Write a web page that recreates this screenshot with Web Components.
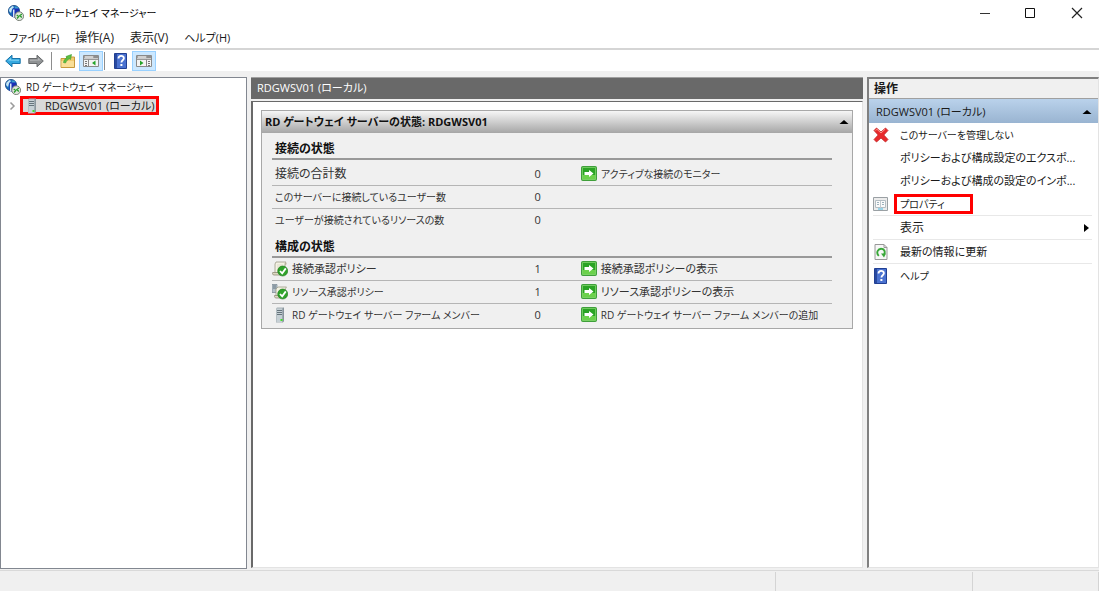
<!DOCTYPE html>
<html lang="ja">
<head>
<meta charset="utf-8">
<meta name="viewport" content="width=device-width, initial-scale=1">
<title>RD ゲートウェイ マネージャー</title>
<style>
  body {
    margin: 0;
    background: #f0f0f0;
    color: #1a1a1a;
    font: 12px/16px "Open Sans", "Noto Sans CJK JP", sans-serif;
    font-feature-settings: "palt";
  }
</style>
</head>
<body>
<console-window></console-window>

<script>
const define = (name, html, setup) => {
  const template = document.createElement('template');
  template.innerHTML = '<style>*,*::after{box-sizing:border-box}button{font:inherit;color:inherit;background:none;border:0;margin:0;padding:0;text-align:left;font-feature-settings:inherit}.small{font-size:10px}.medium{font-size:11px}</style>' + html;
  customElements.define(name, class extends HTMLElement {
    connectedCallback() {
      if (this.shadowRoot) return;
      this.attachShadow({ mode: 'open' }).append(template.content.cloneNode(true));
      if (setup) setup(this, this.shadowRoot);
    }
  });
};

const tower = `
  <path d="M4 1.500 5 .5h7v13.500l-1 1.500H4z" fill="#a3adb3"/>
  <path d="M4.500 1.500h6v13.500h-6z" fill="#c6d0d5"/>
  <path d="M10.500 1.500 12 .5v13.500l-1.500 1.500z" fill="#8a969d"/>
  <path d="M5 3.500h5M5 5.500h5M5 7.500h5" stroke="#66747c"/>
  <path d="M8.500 12h2v2h-2z" fill="#43e02a"/>`;
const check = `
  <circle cx="10.700" cy="10" r="5" fill="#2fa22a" stroke="#187716" stroke-width=".6"/>
  <path d="M8 10l2.200 2.400 3.600-5" fill="none" stroke="#fff" stroke-width="1.800"/>`;
const arrow = 'M.7 8 7 2.200v3.300h8.200v5H7v3.300z';
const windowFrame = `
  <path d="M.5 2.500h15v11H.5z" fill="#f4f4f4" stroke="#8a8a8a"/>
  <path d="M1 3h14v2.500H1z" fill="#a2a2a2"/>
  <path d="M2 4h8" stroke="#fff"/><path d="M11.500 4h1M13.500 4h1" stroke="#555"/>
  <path d="M1 6.500h14" stroke="#999"/>`;
const icons = {
  app: `
    <circle cx="6" cy="6" r="5.600" fill="#1b6fbd" stroke="#14457f" stroke-width=".8"/>
    <path d="M1.500 3.500 4.500 1l1.500 1L4 4.500 3 8 1 6z" fill="#c6e6f4"/>
    <path d="M7 1.500l3.500 1-.5 1.500H7z" fill="#3fa0cf"/>
    <path d="M4.500 3.500h6.500v10.500l-6.500-2z" fill="#1a2fb5"/>
    <path d="M5 4.500h1.500v8L5 12z" fill="#dce9f7"/>
    <circle cx="11.200" cy="11.200" r="4.400" fill="#dfe5dc" stroke="#6f776d" stroke-width=".9"/>
    <path d="M8.700 10l2 1.500-1.700 2M13.900 9l-2 1.500 1.900 2" fill="none" stroke="#279b2a" stroke-width="1.300"/>`,
  back: `<path d="${arrow}" fill="#35a8df" stroke="#1873a9"/><path d="M3 7.500 6 5v1.800h8v1z" fill="#8bd5f3"/>`,
  forward: `<g transform="matrix(-1 0 0 1 16 0)"><path d="${arrow}" fill="#8f9294" stroke="#66696b"/><path d="M3 7.500 6 5v1.800h8v1z" fill="#b6b8ba"/></g>`,
  folder: `
    <path d="M1 5.500h5l1-1.500h7.500v10.500H1z" fill="#f1cb70" stroke="#c79a3c"/>
    <path d="M1.500 8h12.500v6H1.500z" fill="#f9df98"/>
    <path d="M3.500 9.500c.5-2.500 1.500-4 3.500-4.500L6 3.500 11.500 1.500 10.500 6.500 9.300 5.800C7.500 6.500 6.500 8 5.500 10z" fill="#5cc043" stroke="#3b9a2b" stroke-width=".6"/>`,
  tree: windowFrame + `
    <path d="M5.500 6.500v7" stroke="#888"/><path d="M2 8.500h2M2 10.500h2M2 12.500h2" stroke="#777"/>
    <path d="M12.500 7.500v5L9 10z" fill="#25a52a"/>`,
  actions: windowFrame + `
    <path d="M10.500 6.500v7" stroke="#888"/><path d="M12 8.500h2M12 10.500h2M12 12.500h2" stroke="#777"/>
    <path d="M4 7.500v5L7.500 10z" fill="#25a52a"/>`,
  help: `
    <path d="M1.500.5h12v15h-12z" fill="#4a72d0" stroke="#203f93"/>
    <path d="M2 1h2v14H2z" fill="#294a9f"/>
    <path d="M5.500 5.500c0-3.400 5.400-3.400 5.400-.2 0 2-2.500 2-2.500 4.200" fill="none" stroke="#fff" stroke-width="1.800"/>
    <path d="M7.400 11h2v2h-2z" fill="#fff"/>`,
  server: tower,
  policy: `
    <path d="M4 1h10c-1 1-1 2-1 3v8H3V3z" fill="#f4f2e4" stroke="#9c9b85" stroke-width=".8"/>
    <path d="M13 1c2 0 2 3 .5 3H13z" fill="#b7b39d"/>
    <path d="M.7 11.500H9V14H2C.5 14 .3 12.500.7 11.500z" fill="#ddd9c3" stroke="#8f8c76" stroke-width=".8"/>
    <path d="M5 4h6M5 6h6M5 8h4" stroke="#dedbc8"/>` + check,
  resource: `
    <path d="M0 .5h5v8H0z" fill="#b5c1c9" stroke="#77858f" stroke-width=".7"/>
    <path d="M1 2h3M1 4h3" stroke="#647580"/>
    <path d="M6 3h8.500c-1 1-1 2-1 3v7H4V5z" fill="#f4f2e4" stroke="#9c9b85" stroke-width=".8"/>
    <path d="M2.500 11.500H9V14H4c-1.200 0-1.800-1.500-1.500-2.500z" fill="#ddd9c3" stroke="#8f8c76" stroke-width=".8"/>` + check,
  go: `
    <rect x=".5" y=".5" width="15" height="14" rx="1" fill="#2aa324" stroke="#3f9f3a"/>
    <path d="M1.500 9h13v4.500h-13z" fill="#6bd14b"/>
    <path d="M1.500 1.500h13v12h-13z" fill="none" stroke="#8edb79" stroke-width=".7"/>
    <path d="M3.500 6H8V4l4.500 3.500L8 11V9H3.500z" fill="#fff"/>`,
  remove: `
    <path d="M1 3.500 3.500 1 8 5l4.500-4L15 3.500 10.800 8l4.200 4.500-2.500 2.500L8 11l-4.500 4L1 12.500 5.200 8z" fill="#e8292c" stroke="#c22424" stroke-width=".8"/>
    <path d="M2.500 3.500 4 2.300 8 6l4-3.700" fill="none" stroke="#ff9186"/>`,
  properties: `
    <path d="M.5 1.500h14v13H.5z" fill="#ececec" stroke="#9aa0a4"/>
    <path d="M2.500 4.500h10v7h-10z" fill="#fafafa" stroke="#b4bec4"/>
    <path d="M7.500 5v7" stroke="#c3cbd0"/>
    <path d="M4 6.500h2M4 8.500h2M9 6.500h2M9 8.500h2" stroke="#9db2bd"/>
    <path d="M5 13h5" stroke="#45bbe5"/>`,
  refresh: `
    <path d="M2 .5h9l3 3v12H2z" fill="#f7f7f7" stroke="#989898"/>
    <path d="M11 .5v3h3" fill="none" stroke="#989898"/>
    <path d="M5.800 11.800C2.500 8.500 5.300 4.500 8.500 4.800c3.300.2 3.800 3.400 2.600 5.700" fill="none" stroke="#38a738" stroke-width="1.900"/>
    <path d="M8 9.500h5l-2 4z" fill="#38a738"/>`,
  minimize: '<path d="M4 8.500h10" stroke="#333"/>',
  maximize: '<path d="M3.500 3.500h9v9h-9z" fill="none" stroke="#111"/>',
  close: '<path d="M4 3l10 10M14 3 4 13" stroke="#222" stroke-width="1.200"/>',
  chevron: '<path d="M6.500 4.500 10 8 6.500 11.500" fill="none" stroke="#9b9b9b" stroke-width="1.500"/>',
  up: '<path d="M3.500 10h9L8 6z" fill="#000"/>',
  right: '<path d="M8 4v8l5-4z" fill="#000"/>'
};
define('mmc-icon', `<style>:host{display:block;flex:none;width:16px;height:16px}svg{display:block}</style>
  <svg width="16" height="16" viewBox="0 0 16 16" aria-hidden="true"></svg>`,
  (host, root) => { root.querySelector('svg').innerHTML = icons[host.getAttribute('name')] || ''; });

define('title-bar', `<style>
  :host{display:flex;align-items:center;height:26px;padding-left:8px;background:#fff}
  h1{flex:1;margin:0 0 0 5px;font:inherit;font-size:10px;color:#000}
  button{display:grid;place-items:center;width:46px;height:26px}
  </style>
  <mmc-icon name="app"></mmc-icon><h1><slot></slot></h1>
  <button aria-label="最小化"><mmc-icon name="minimize"></mmc-icon></button>
  <button aria-label="最大化"><mmc-icon name="maximize"></mmc-icon></button>
  <button aria-label="閉じる"><mmc-icon name="close"></mmc-icon></button>`);

define('menu-bar', `<style>
  :host{display:block;background:#fff;border-bottom:2px solid #d5d5d5}
  nav{display:flex;gap:16px;height:22px;padding:2px 0 0 9px;align-items:center}
  </style>
  <nav><button class="medium">ファイル(F)</button><button>操作(A)</button><button>表示(V)</button><button class="medium">ヘルプ(H)</button></nav>`);

define('tool-bar', `<style>
  :host{display:flex;align-items:center;height:21px;padding-left:5px;background:#fff}
  button{display:grid;place-items:center;width:16px;height:20px}
  .gap{margin-left:7px}
  .on{width:24px;margin-left:3px;background:#cce8ff;border:1px solid #99d1ff}
  i{width:1px;height:18px;background:#8d8d8d;margin:0 8px 0 7px}
  .narrow{margin:0 8px 0 1px}
  </style>
  <button aria-label="戻る"><mmc-icon name="back"></mmc-icon></button>
  <button class="gap" aria-label="進む"><mmc-icon name="forward"></mmc-icon></button>
  <i></i>
  <button aria-label="上へ"><mmc-icon name="folder"></mmc-icon></button>
  <button class="on" aria-label="コンソール ツリーの表示"><mmc-icon name="tree"></mmc-icon></button>
  <i class="narrow"></i>
  <button aria-label="ヘルプ"><mmc-icon name="help"></mmc-icon></button>
  <button class="on" aria-label="操作ウィンドウの表示"><mmc-icon name="actions"></mmc-icon></button>`);

define('tree-pane', `<style>
  :host{display:block;background:#fff;border:1px solid #828790;min-width:0}
  ul{list-style:none;margin:0;padding:0}
  .row{display:flex;align-items:center;height:18px;padding-left:4px}
  .row button{padding-left:5px}
  .child{height:19px;padding-left:3px}
  .child .selected{display:flex;align-items:center;height:19px;padding:0 2px 0 1px;background:#d9d9d9;border:3px solid #f00}
  .selected span{margin-left:5px}
  </style>
  <ul>
    <li><div class="row"><mmc-icon name="app"></mmc-icon><button class="small">RD ゲートウェイ マネージャー</button></div>
      <ul><li class="row child"><mmc-icon name="chevron"></mmc-icon><button class="selected medium"><mmc-icon name="server"></mmc-icon><span>RDGWSV01 (ローカル)</span></button></li></ul>
    </li>
  </ul>`);

define('status-card', `<style>
  :host{display:block;background:#f0f0f0;border:1px solid #a8a8a8;color:#333}
  header{display:flex;align-items:center;justify-content:space-between;height:22px;padding:0 0 0 3px;background:linear-gradient(#f6f6f6,#a6a6a6);color:#111}
  h2{margin:0;font:inherit;font-size:11px;font-weight:700}
  .body{padding:0 20px 2px 10px}
  table{width:100%;border-collapse:collapse;table-layout:fixed}
  th,td{padding:1px 0 0;height:23px;font-weight:400;text-align:left;white-space:nowrap;border-bottom:1px solid #b5b5b5}
  .head th{height:26px;padding:6px 0 0 3px;font-weight:700;color:#111;border-bottom:2px solid #999}
  .first>*{height:26px;padding-top:4px}
  .last>*{border:0}
  .label{padding-left:3px}
  .label.pic{padding-left:0}
  .n{text-align:right}
  td:last-child{padding-left:40px}
  .with{display:flex;align-items:center;gap:4px}
  a{color:inherit;text-decoration:none}
  .c1{width:45%}.c2{width:3%}
  </style>
  <header><h2><slot></slot></h2><button aria-label="折りたたむ"><mmc-icon name="up"></mmc-icon></button></header>
  <div class="body"><table>
    <colgroup><col class="c1"><col class="c2"><col></colgroup>
    <tbody>
      <tr class="head"><th colspan="3">接続の状態</th></tr>
      <tr class="first"><th class="label">接続の合計数</th><td class="n medium">0</td><td><a class="with small" href="#monitor"><mmc-icon name="go"></mmc-icon>アクティブな接続のモニター</a></td></tr>
      <tr><th class="label small">このサーバーに接続しているユーザー数</th><td class="n medium">0</td><td></td></tr>
      <tr class="last"><th class="label small">ユーザーが接続されているリソースの数</th><td class="n medium">0</td><td></td></tr>
    </tbody>
    <tbody>
      <tr class="head"><th colspan="3">構成の状態</th></tr>
      <tr><th class="label pic"><span class="with medium"><mmc-icon name="policy"></mmc-icon>接続承認ポリシー</span></th><td class="n medium">1</td><td><a class="with medium" href="#cap"><mmc-icon name="go"></mmc-icon>接続承認ポリシーの表示</a></td></tr>
      <tr><th class="label pic"><span class="with small"><mmc-icon name="resource"></mmc-icon>リソース承認ポリシー</span></th><td class="n medium">1</td><td><a class="with medium" href="#rap"><mmc-icon name="go"></mmc-icon>リソース承認ポリシーの表示</a></td></tr>
      <tr class="last"><th class="label pic"><span class="with small"><mmc-icon name="server"></mmc-icon>RD ゲートウェイ サーバー ファーム メンバー</span></th><td class="n medium">0</td><td><a class="with small" href="#farm"><mmc-icon name="go"></mmc-icon>RD ゲートウェイ サーバー ファーム メンバーの追加</a></td></tr>
    </tbody>
  </table></div>`);

define('detail-pane', `<style>
  :host{display:flex;flex-direction:column;min-width:0;border-top:1px solid #a0a0a0}
  header{height:21px;padding:2px 6px;background:#696969;color:#fff}
  .view{flex:1;margin-top:2px;padding:8px 9px 8px 8px;background:#fff;border:1px solid #e3e3e3;border-left:2px solid #696969;border-top:1px solid #696969}
  </style>
  <header class="medium">RDGWSV01 (ローカル)</header>
  <div class="view"><status-card>RD ゲートウェイ サーバーの状態: RDGWSV01</status-card></div>`);

define('action-item', `<style>
  :host{display:block;padding:0 6px 0 4px}
  :host([divided]) button{height:24px;border-bottom:1px solid #e8e8e8}
  button{display:flex;align-items:center;width:100%;height:23px}
  .label{position:relative;margin-left:11px;white-space:nowrap;flex:1}
  :host([marked]) .label::after{content:"";position:absolute;left:-6px;top:-2px;width:79px;height:20px;border:3px solid #f00}
  </style>
  <button><mmc-icon></mmc-icon><span class="label"><slot></slot></span><slot name="end"></slot></button>`,
  (host, root) => {
    const icon = document.createElement('mmc-icon');
    icon.setAttribute('name', host.getAttribute('icon') || '');
    root.querySelector('mmc-icon').replaceWith(icon);
  });

define('actions-pane', `<style>
  :host{display:block;background:#fff;border:2px solid #808080;border-right:1px solid #e3e3e3;border-bottom:1px solid #e3e3e3;min-width:0;overflow:hidden}
  h2{margin:0;height:20px;padding:2px 5px;font:inherit;font-weight:700;background:#f0f0f0;border-bottom:1px solid #a0a0a0}
  .group{display:flex;align-items:center;justify-content:space-between;width:100%;height:24px;padding:1px 3px 0 7px;background:linear-gradient(#bad2eb,#99b4d1)}
  </style>
  <h2>操作</h2>
  <button class="group medium">RDGWSV01 (ローカル)<mmc-icon name="up"></mmc-icon></button>
  <action-item class="small" icon="remove">このサーバーを管理しない</action-item>
  <action-item class="medium">ポリシーおよび構成設定のエクスポ...</action-item>
  <action-item class="medium">ポリシーおよび構成の設定のインポ...</action-item>
  <action-item class="small" icon="properties" divided marked>プロパティ</action-item>
  <action-item divided>表示<mmc-icon slot="end" name="right"></mmc-icon></action-item>
  <action-item class="medium" icon="refresh" divided>最新の情報に更新</action-item>
  <action-item class="small" icon="help">ヘルプ</action-item>`);

define('status-bar', `<style>
  :host{display:grid;grid-template-columns:1fr 197px 126px;height:21px;background:#f0f0f0;border-top:1px solid #d9d9d9}
  span{border-right:1px solid #d4d4d4;margin-top:1px}
  </style><span></span><span></span><span></span>`);

define('console-window', `<style>
  :host{display:flex;flex-direction:column;min-height:100vh}
  main{flex:1;display:grid;grid-template-columns:247px minmax(0,1fr) 232px;column-gap:4px;padding:6px 0 1px}
  detail-pane,actions-pane{margin-bottom:1px}
  </style>
  <title-bar>RD ゲートウェイ マネージャー</title-bar>
  <menu-bar></menu-bar>
  <tool-bar></tool-bar>
  <main><tree-pane></tree-pane><detail-pane></detail-pane><actions-pane></actions-pane></main>
  <status-bar></status-bar>`);
</script>
</body>
</html>
